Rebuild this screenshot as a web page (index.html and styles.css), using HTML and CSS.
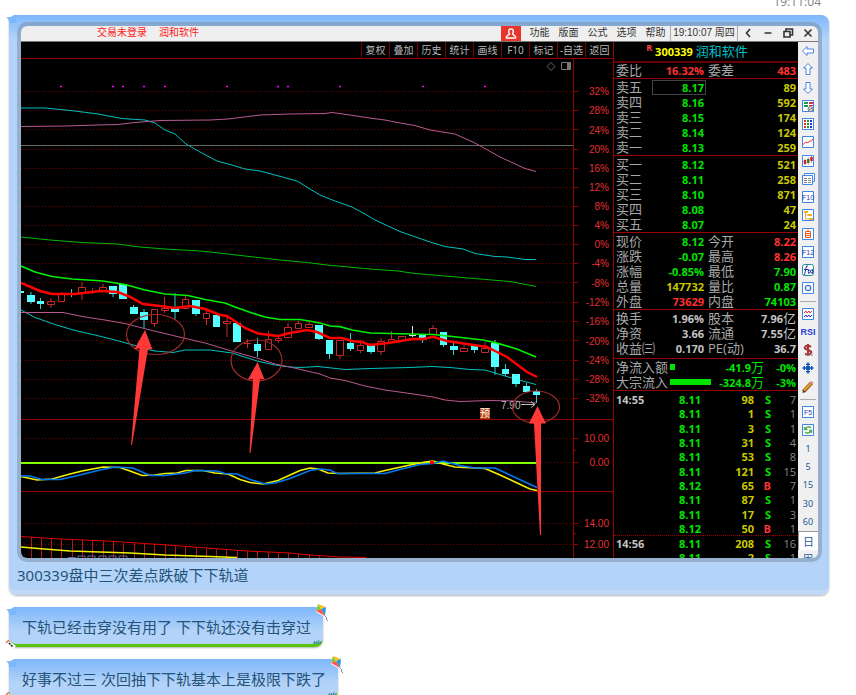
FILE: index.html
```html
<!DOCTYPE html>
<html lang="zh-CN">
<head>
	<meta charset="utf-8">
	<title>300339 润和软件</title>
	<link rel="stylesheet" href="styles.css">
</head>
<body>
<div class="chat">
	<div class="time">19:11:04</div>

	<div class="bubble big">
		<svg class="tail" viewBox="0 0 10 10"><path d="M0 2Q5 3 8 0H10V8H3Q3 4 0 2z" fill="#7db7fb"/></svg>
		<div class="frame">
			<div class="titlebar">
				<span class="login">交易未登录</span>
				<span class="login">润和软件</span>
				<button class="user" aria-label="用户"><svg viewBox="0 0 12 12"><path d="M6 1C3 1 3.500 4 4.500 6L1.500 8.500V10H10.500V8.500L7.500 6C8.500 4 9 1 6 1z" fill="none" stroke="#fff" stroke-width="1.500"/></svg></button>
				<button>功能</button><button>版面</button><button>公式</button><button>选项</button><button>帮助</button>
				<span class="clock">19:10:07 周四</span>
				<button class="win" aria-label="后退"><svg viewBox="0 0 12 12"><path d="M8 2L4.500 6L8 10"/></svg></button>
				<button class="win" aria-label="最小化"><svg viewBox="0 0 12 12"><path d="M2.500 6H9.500"/></svg></button>
				<button class="win" aria-label="还原"><svg viewBox="0 0 12 12"><path d="M4 4V2H10.500V8H8.500M2 4.500H8V10H2z"/></svg></button>
				<button class="win" aria-label="关闭"><svg viewBox="0 0 12 12"><path d="M2.500 2.500L9.500 9.500M9.500 2.500L2.500 9.500"/></svg></button>
			</div>

			<div class="work">
				<div class="left">
					<div class="tabs">
						<button>复权</button><button>叠加</button><button>历史</button><button>统计</button><button>画线</button><button>F10</button><button>标记</button><button>-自选</button><button>返回</button>
					</div>
					<svg class="chart" viewBox="21 59 592 499">
						<!-- grid -->
						<path class="dots" d="M21 91.5H571M21 110.5H571M21 129.500H571M21 149.500H571M21 168.500H571M21 187.500H571M21 206.500H571M21 225.500H571M21 244.500H571M21 263.500H571M21 282.500H571M21 302.500H571M21 321.500H571M21 340.500H571M21 360.500H571M21 379.500H571M21 398.500H571M21 438.500H571M539 462.500H571M21 523.500H571M21 544.500H571"/>
						<path class="rule" d="M573.500 59V558M21 419.500H613M21 491.500H613M574 91.500h4M574 110.500h4M574 129.500h4M574 149.500h4M574 168.500h4M574 187.500h4M574 206.500h4M574 225.500h4M574 244.500h4M574 263.500h4M574 282.500h4M574 302.500h4M574 321.500h4M574 340.500h4M574 360.500h4M574 379.500h4M574 398.500h4M574 438.500h4M574 450.500h2M574 462.500h4M574 523.500h4M574 533.500h2M574 544.500h4"/>
						<path d="M21 145.500H573" stroke="#666" />
						<path d="M551 62.500l4 4-4 4-4-4z" fill="none" stroke="#666"/>
						<path d="M561.500 62.500h9v7h-9z" fill="none" stroke="#777"/><path d="M567 63h3v6h-3z" fill="#777"/>
						<path d="M60 86.500h2M112 86.500h2M122 86.500h2M143 86.500h2M164 86.500h2M226 86.500h2M277 86.500h2M287 86.500h2M339 86.500h2M422 86.500h2M484 86.500h2" stroke="#f0f" stroke-width="1.500"/>
						<!-- axis -->
						<g class="axis">
							<text x="609" y="95">32%</text><text x="609" y="114">28%</text><text x="609" y="134">24%</text><text x="609" y="153">20%</text><text x="609" y="172">16%</text><text x="609" y="191">12%</text><text x="609" y="210">8%</text><text x="609" y="229">4%</text><text x="609" y="248">0%</text><text x="609" y="267">-4%</text><text x="609" y="287">-8%</text><text x="609" y="306">-12%</text><text x="609" y="325">-16%</text><text x="609" y="345">-20%</text><text x="609" y="364">-24%</text><text x="609" y="383">-28%</text><text x="609" y="402">-32%</text>
							<text x="609" y="442">10.00</text><text x="609" y="466">0.00</text><text x="609" y="527">14.00</text><text x="609" y="548">12.00</text>
						</g>
						<!-- outer tracks -->
						<polyline class="cyan" points="21,108 45,108 60,109.500 75,111 98,114 122,118.500 145,120 155,123 165,130 175,134 186,144 200,152 217,161 232,165 245,169 260,171 275,175 297,181 305,186 320,195 335,201 352,207 365,214 375,220 400,231.500 430,242 445,246.500 463,249 475,253.500 495,256.500 507,257 525,259.500 536,259.500"/>
						<polyline class="pink" points="21,126.500 66,126 97,125 118,124.500 135,122.500 160,120.500 210,120 228,119 260,115 290,114 325,113.500 332,112.500 350,115 373,118.500 385,120 400,123 415,125.500 430,130 455,134 475,143 500,157 525,168.500 536,171.500"/>
						<polyline class="thin" points="21,237 50,240 82,242.500 117,244 140,247 165,249 200,251 219,253 245,256 280,260 307,262.500 327,265 370,269 398,271 415,273.500 445,276 480,279 510,281.500 536,286.500"/>
						<polyline class="cyan" points="21,310 35,317.500 55,324.500 75,330.500 95,335 115,340 135,345.500 145,349 155,351 173,352.500 185,350 210,350 232,353 257,361 275,365 290,367 300,367.500 318,366.500 345,369.500 370,368.500 410,367.500 432,366.500 450,367.500 470,369.500 485,370 495,373 515,379 536,384.500"/>
						<polyline class="pink" points="21,312.500 63,312.500 85,317 105,320 125,323.500 150,330 175,336 205,343 235,352 260,359 275,364 290,367 320,374 330,378 345,380.500 365,386 385,390 410,393.500 433,397 445,400 460,401.500 490,400.500 515,401 536,403"/>
						<!-- candles: down, then up -->
						<path class="downwick" d="M31 292V304M40.500 298V309M71.500 289V297M68 293.500h7M113 286V297M133.500 305V314M144 309V328M175 293V319M196 300V316M257.500 338V357M319 325V340M329.500 340V359M350.500 333V351M371 345V354M422.500 334V343M443.500 332V347M453.500 343V355M474.500 346V353M495 340V375M505.500 364V376M516 374V387M526.500 383V392M536.500 389V403"/>
						<path class="down" d="M21 291h3v2h-3zM27 295h8v7h-8zM37 301h7v3h-7zM109 286h8v8h-8zM119 284h8v15h-8zM130 307h8v7h-8zM140 312h8v8h-8zM171 308h8v4h-8zM192 300h8v14h-8zM213 315h7v12h-7zM233 323h8v19h-8zM254 344h7v7h-7zM315 325h8v14h-8zM326 340h7v14h-7zM347 343h7v6h-7zM367 345h8v7h-8zM419 334h7v6h-7zM440 332h7v13h-7zM450 346h8v4h-8zM471 346h7v4h-7zM491 343h8v24h-8zM502 369h7v5h-7zM512 374h8v10h-8zM523 386h7v6h-7zM533 391h7v4h-7z"/>
						<path class="up" d="M47.500 301.500h7v3h-7zM51 298v3M51 305v3M58.500 294.500h6v7h-6zM62 292v2M78.500 287.500h7v5h-7zM82 282v5M82 293v7M92.500 288v6M99.500 287.500h7v3h-7zM103 284v3M151.500 309.500h6v14h-6zM154.500 324v3M161.500 308.500h7v2h-7zM164.500 297v11M164.500 311v2M182.500 299.500h6v9h-6zM185.500 296v3M203.500 313.500h6v5h-6zM206.500 311v2M206.500 319v6M223.500 321.500h7v2h-7zM227 317v4M227 324v13M244 343.500h7M247.500 339v9M265.500 339.500h6v10h-6zM268.500 331v8M275.500 338.500h6v2h-6zM278.500 335v3M278.500 341v2M284.500 327.500h7v10h-7zM288 323v4M295.500 323.500h6v5h-6zM298.500 321v2M305.500 324.500h7v3h-7zM309 320v4M336.500 340.500h7v15h-7zM340 356v3M357.500 345.500h6v5h-6zM360.500 340v5M360.500 351v2M377.500 341.500h7v10h-7zM381 338v3M381 352v3M388.500 339.500h6v3h-6zM391.500 331v8M398.500 336.500h7v4h-7zM429.500 328.500h7v6h-7zM433 325v3M460.500 348.500h7v3h-7zM464 344v4M481.500 348.500h7v4h-7zM485 342v6"/>
						<path d="M412.500 326v11M409 335.500h7" stroke="#ddd"/>
						<polyline class="lime" points="21,266 35,272 52,276.500 72,279 103,281 125,284.500 145,290 165,294 188,295.500 205,299.500 225,303 235,307 252,313 265,317 280,319.500 300,319.500 312,321.500 320,323 330,326 340,326.600 352,330 370,333 433,334.500 457,337 483,340 495,342.600 517,349 536,357"/>
						<polyline class="hot" points="21,283 40,291 52,294 75,294 100,291 118,292 130,297 143,304 160,306 175,308 190,306 205,309 220,315 227,316 245,328 258,333.500 278,336 290,333 307,330 317,332 330,338 342,338 352,341 362,342 370,345 388,343 413,339 423,339 433,336.700 447,341 487,347 497,352 507,357 527,372 537,377"/>
						<!-- oscillator -->
						<path d="M21 463H537" stroke="#7fff00" stroke-width="2"/>
						<polyline class="yellow" points="21,476.500 37,480 52,479 70,474 82,471 103,467 120,467.500 130,471 142,475.500 155,475 165,473.500 177,473 186,470.500 203,470.500 215,473 228,474 240,479.500 250,482.500 263,484 278,480.500 290,475 300,470.500 310,468 318,469 328,473 340,473.500 375,473 385,470.500 410,465 425,462 433,461 443,464 455,467 485,468.500 500,475 515,482 530,489 537,490.500"/>
						<polyline class="blue" points="21,476 30,476 42,479.500 60,479.500 80,475 100,470 115,467 133,468 150,475.500 165,475.500 185,473 195,470.500 217,471 225,473.500 237,474 250,479.500 265,484 275,483 290,478.500 310,470.500 320,469 330,470 337,473.500 385,473.500 400,469.500 420,464.500 433,463.500 443,461 460,465.500 475,468 495,468 537,487.500"/>
						<path d="M430 462.500h4" stroke="#f00" stroke-width="3"/>
						<!-- third panel -->
						<path d="M31.500 537V558M41.500 538V558M51.500 538V558M61.500 539V558M72.500 540V558M82.500 540V558M92.500 541V558M103.500 541V558M113.500 542V558M123.500 543V558M134.500 543V558M144.500 544V558M154.500 544V558M165.500 545V558M175.500 546V558M185.500 547V558M196.500 547V558M206.500 548V558M216.500 549V558M226.500 550V558M237.500 550V558M247.500 551V558M257.500 552V558M268.500 552V558M278.500 553V558M288.500 553V558M298.500 554V558M309.500 555V558M319.500 556V558M329.500 557V558" stroke="#b01818"/>
						<polyline points="21,536.500 60,539 107,541 160,544.500 200,547.500 247,551 290,553 310,555 340,557 366,557.500" fill="none" stroke="#d00"/>
						<polyline class="yellow" points="21,547 38,548.500 70,551 130,553 165,555 210,556.500 237,557.500"/>
						<path d="M68 557.500h8M78 558v-2h7v2M88 558v-2h7v2M99 558v-2h7v2M109 558v-2h7v2M119 558v-2h8v2" fill="none" stroke="#669"/>
						<!-- marks -->
						<path d="M480 408h10v11h-10z" fill="#b8440c"/><text x="480" y="417" class="mark">预</text>
						<text x="501" y="409" class="low">7.90</text>
						<path d="M521 404.500H535M531 401.500l4 3-4 3" fill="none" stroke="#bbb"/>
						<g fill="none" stroke="#a02c2c" stroke-width="1.200"><ellipse cx="155.500" cy="334.500" rx="29" ry="20"/><ellipse cx="256.500" cy="360.500" rx="25.500" ry="20.500"/><ellipse cx="536" cy="407" rx="23.500" ry="16"/></g>
						<path class="arrow" d="M145 330L152.500 349.500 148 349 132 445H131L139.500 348.500 134.500 349zM257.500 362L264.500 379.500 260 379 250.500 453H249.500L253 379 248 379.500zM537.500 406L546 423.500 541 423.500 541 535H540L534 423.500 529 423.500z"/>
					</svg>
				</div>

				<div class="quote">
					<h1><sup>R</sup> <b>300339</b> <span>润和软件</span></h1>
					<table class="ratio"><tr><th>委比</th><td class="r">16.32%</td><th>委差</th><td class="r">483</td></tr></table>
					<table class="book">
						<tr><th>卖五</th><td class="g sel">8.17</td><td class="y" colspan="2">89</td></tr>
						<tr><th>卖四</th><td class="g">8.16</td><td class="y" colspan="2">592</td></tr>
						<tr><th>卖三</th><td class="g">8.15</td><td class="y" colspan="2">174</td></tr>
						<tr><th>卖二</th><td class="g">8.14</td><td class="y" colspan="2">124</td></tr>
						<tr><th>卖一</th><td class="g">8.13</td><td class="y" colspan="2">259</td></tr>
					</table>
					<table class="book">
						<tr><th>买一</th><td class="g">8.12</td><td class="y" colspan="2">521</td></tr>
						<tr><th>买二</th><td class="g">8.11</td><td class="y" colspan="2">258</td></tr>
						<tr><th>买三</th><td class="g">8.10</td><td class="y" colspan="2">871</td></tr>
						<tr><th>买四</th><td class="g">8.08</td><td class="y" colspan="2">47</td></tr>
						<tr><th>买五</th><td class="g">8.07</td><td class="y" colspan="2">24</td></tr>
					</table>
					<table>
						<tr><th>现价</th><td class="g">8.12</td><th>今开</th><td class="r">8.22</td></tr>
						<tr><th>涨跌</th><td class="g">-0.07</td><th>最高</th><td class="r">8.26</td></tr>
						<tr><th>涨幅</th><td class="g">-0.85%</td><th>最低</th><td class="g">7.90</td></tr>
						<tr><th>总量</th><td class="y">147732</td><th>量比</th><td class="g">0.87</td></tr>
						<tr><th>外盘</th><td class="r">73629</td><th>内盘</th><td class="g">74103</td></tr>
					</table>
					<table class="stat">
						<tr><th>换手</th><td>1.96%</td><th>股本</th><td>7.96<i>亿</i></td></tr>
						<tr><th>净资</th><td>3.66</td><th>流通</th><td>7.55<i>亿</i></td></tr>
						<tr><th>收益㈢</th><td>0.170</td><th>PE(动)</th><td>36.7</td></tr>
					</table>
					<table class="flow">
						<tr><th>净流入额</th><td><span class="bar" style="width:5px"></span></td><td class="g">-41.9<i>万</i></td><td class="g">-0%</td></tr>
						<tr><th>大宗流入</th><td><span class="bar" style="width:41px"></span></td><td class="g">-324.8<i>万</i></td><td class="g">-3%</td></tr>
					</table>
					<table class="ticks">
						<tr><td>14:55</td><td class="g">8.11</td><td class="y">98</td><td class="g">S</td><td>7</td></tr>
						<tr><td></td><td class="g">8.11</td><td class="y">1</td><td class="g">S</td><td>1</td></tr>
						<tr><td></td><td class="g">8.11</td><td class="y">3</td><td class="g">S</td><td>1</td></tr>
						<tr><td></td><td class="g">8.11</td><td class="y">31</td><td class="g">S</td><td>4</td></tr>
						<tr><td></td><td class="g">8.11</td><td class="y">53</td><td class="g">S</td><td>8</td></tr>
						<tr><td></td><td class="g">8.11</td><td class="y">121</td><td class="g">S</td><td>15</td></tr>
						<tr><td></td><td class="g">8.12</td><td class="y">65</td><td class="r">B</td><td>7</td></tr>
						<tr><td></td><td class="g">8.11</td><td class="y">87</td><td class="g">S</td><td>1</td></tr>
						<tr><td></td><td class="g">8.11</td><td class="y">17</td><td class="g">S</td><td>3</td></tr>
						<tr><td></td><td class="g">8.12</td><td class="y">50</td><td class="r">B</td><td>1</td></tr>
						<tr class="minute"><td>14:56</td><td class="g">8.11</td><td class="y">208</td><td class="g">S</td><td>16</td></tr>
						<tr><td></td><td class="g">8.11</td><td class="y">2</td><td class="g">S</td><td>1</td></tr>
					</table>
				</div>

				<div class="tools">
					<button aria-label="左"><svg viewBox="0 0 14 14"><path class="ar" d="M1.500 7L6 2.500V5H12.500V9H6V11.500z"/></svg></button>
					<button aria-label="上"><svg viewBox="0 0 14 14"><path class="ar" d="M7 1.500L11.500 6H9V12.500H5V6H2.500z"/></svg></button>
					<button aria-label="下"><svg viewBox="0 0 14 14"><path class="ar" d="M7 12.500L2.500 8H5V1.500H9V8H11.500z"/></svg></button>
					<button aria-label="报价"><svg viewBox="0 0 14 14"><path class="bx" d="M1.500 1.500h11v11h-11z"/><path d="M3 3h4v2H3zM3 6h4v2H3z" fill="#1a9a4a"/><path d="M8 3h4v2H8zM8 6h4v1H8z" fill="#d33"/><circle cx="9.500" cy="10" r="2.500" fill="#ddd" stroke="#777"/><path d="M8 11l3-2" stroke="#777"/></svg></button>
					<button aria-label="列表"><svg viewBox="0 0 14 14"><path class="bx" d="M1.500 1.500h11v11h-11z"/><path d="M4 3v9" stroke="#d33" stroke-width="2" stroke-dasharray="2 1"/><path d="M7 3v9" stroke="#292" stroke-width="2" stroke-dasharray="2 1"/><path d="M10 3v9" stroke="#23d" stroke-width="2" stroke-dasharray="2 1"/></svg></button>
					<button aria-label="分时"><svg viewBox="0 0 14 14"><path class="bx" d="M1.500 1.500h11v11h-11z"/><path d="M2 9.500L5 7 7 8 9 5.500 10 6.500 12 4" fill="none" stroke="#e33"/></svg></button>
					<button aria-label="K线"><svg viewBox="0 0 14 14"><path class="bx" d="M1.500 1.500h11v11h-11z"/><path d="M4 6v4M10.500 3v4" stroke="#e11" stroke-width="2.500"/><path d="M7.300 5v4" stroke="#183" stroke-width="2.500"/><path d="M4 5v6M7.300 3v8M10.500 2v7" stroke="#a33" stroke-width=".5"/></svg></button>
					<button aria-label="窗口"><svg viewBox="0 0 14 14"><path class="bx" d="M3.500 1.500h10v8h-10z"/><path class="bx" d="M1.500 3.500h10v9h-10z"/><path d="M3 6.500h7M3 8.500h7M3 10.500h7" stroke="#888" stroke-dasharray="3 1"/></svg></button>
					<button aria-label="F10"><svg viewBox="0 0 14 14"><path class="bx" d="M1.500 1.500h11v11h-11z"/><text x="7" y="10">F10</text></svg></button>
					<button aria-label="树"><svg viewBox="0 0 14 14"><path class="bx" d="M1.500 1.500h11v11h-11z"/><path d="M3 3h4v2H3zM7 6h4v2H7zM8 10h4v2H8z" fill="#f0b020"/><path d="M4.500 5v6H8M4.500 7H7" fill="none" stroke="#da5"/></svg></button>
					<button aria-label="自选"><svg viewBox="0 0 14 14"><path class="bx" d="M1.500 1.500h11v11h-11z"/><path d="M4.500 4.500h5v6h-5zM4.500 6.500h5M4.500 8.500h5M7 2.500v2" fill="none" stroke="#e85a14"/></svg></button>
					<button aria-label="F12"><svg viewBox="0 0 14 14"><path class="bx" d="M1.500 1.500h11v11h-11z"/><text x="7" y="10">F12</text></svg></button>
					<button aria-label="公式"><svg viewBox="0 0 14 14"><rect x="1.500" y="1.500" width="11" height="11" rx="2" fill="#fff" stroke="#298a9a"/><path d="M7 3Q5 2 5 5L3.500 12M3 6.500H7M8 6Q6.500 8 8 11M11 6Q12.500 8 11 11M8.500 7l2 3M10.500 7l-2 3" fill="none" stroke="#23a"/></svg></button>
					<button aria-label="圈"><svg viewBox="0 0 14 14"><path class="bx" d="M1.500 1.500h11v11h-11z"/><circle cx="7" cy="7" r="2.700" fill="none" stroke="#37b" stroke-width="1.300"/></svg></button>
					<hr>
					<button aria-label="指标"><svg viewBox="0 0 14 14"><path class="bx" d="M1.500 1.500h11v11h-11z"/><path d="M3 6l2-2 1 2 2-2 1 2 2-2" fill="none" stroke="#e33"/><path d="M3 10l2-2 1 2 2-2 1 2 2-2" fill="none" stroke="#33c"/></svg></button>
					<button class="rsi">RSI</button>
					<button aria-label="资金"><svg viewBox="0 0 14 14"><path d="M10 4Q7 1.500 4.500 3.500T7 7T9.500 10.500T4 10.500M7 1v12" fill="none" stroke="#a33" stroke-width="2"/><path d="M4 12h8" stroke="#888"/></svg></button>
					<button aria-label="移动"><svg viewBox="0 0 14 14"><path d="M7 1L9.500 4h-5zM7 13L4.500 10h5zM1 7L4 4.500v5zM13 7L10 9.500v-5zM5 5h4v4H5z" fill="#1558b8"/><path d="M7 3v8M3 7h8" stroke="#1558b8" stroke-width="1.500"/></svg></button>
					<button aria-label="画笔"><svg viewBox="0 0 14 14"><path d="M2.500 11.500L10.500 3" stroke="#8a5a1a" stroke-width="4"/><path d="M3 10.500L10 3.500" stroke="#f0a030" stroke-width="2"/><path d="M10 3.500l1.500-1.500" stroke="#d88" stroke-width="3"/><path d="M1.500 13l.5-3 2 2z" fill="#333"/></svg></button>
					<hr>
					<button aria-label="F5"><svg viewBox="0 0 14 14"><path class="bx" d="M1.500 1.500h11v11h-11z"/><text x="7" y="10">F5</text></svg></button>
					<button aria-label="刷新"><svg viewBox="0 0 14 14"><path class="bx" d="M1.500 1.500h11v11h-11z"/><path d="M10 5Q7 2.500 4.500 5.500M3.500 4v2.500h3M4 9Q7 11.500 9.500 8.500M10.500 10V7.500H8" fill="none" stroke="#4cae4c" stroke-width="1.500"/></svg></button>
					<button>1</button><button>5</button><button>15</button><button>30</button><button>60</button>
					<button class="day">日</button><button class="week">周</button>
				</div>
			</div>
		</div>
		<p>300339盘中三次差点跌破下下轨道</p>
	</div>

	<div class="bubble">
		<svg class="tail" viewBox="0 0 10 10"><path d="M0 2Q5 3 8 0H10V8H3Q3 4 0 2z" fill="#7db7fb"/></svg>
		<p>下轨已经击穿没有用了 下下轨还没有击穿过</p>
		<svg class="kite" viewBox="0 0 14 18"><path d="M3 0L11 3 10 13 1 8z" fill="#fff"/><path d="M3 0L6 5 1 7z" fill="#7c3"/><path d="M3 0L11 3 6 5z" fill="#fb2"/><path d="M11 3L10 12 6 5z" fill="#29d"/><path d="M1 7L6 5 10 12z" fill="#f54"/><path d="M10 12l2 2-1 1 2 2" fill="none" stroke="#88b"/></svg>
		<svg class="grass" viewBox="0 0 9 4"><path d="M1 4L2 1M3 4L4 1M5 4L6 0M7 4L8 1M0 3h8" stroke="#398a8a" fill="none"/></svg>
		<svg class="line" viewBox="0 0 12 8"><path d="M1 3l3-3" stroke="#f65" stroke-width="1.500"/><path d="M4 3l6 4" stroke="#fff" stroke-width="3"/><path d="M4 3l4 4" stroke="#222" stroke-width="1.500" stroke-dasharray="2 1"/></svg>
	</div>

	<div class="bubble">
		<svg class="tail" viewBox="0 0 10 10"><path d="M0 2Q5 3 8 0H10V8H3Q3 4 0 2z" fill="#7db7fb"/></svg>
		<p>好事不过三 次回抽下下轨基本上是极限下跌了</p>
		<svg class="kite" viewBox="0 0 14 18"><path d="M3 0L11 3 10 13 1 8z" fill="#fff"/><path d="M3 0L6 5 1 7z" fill="#7c3"/><path d="M3 0L11 3 6 5z" fill="#fb2"/><path d="M11 3L10 12 6 5z" fill="#29d"/><path d="M1 7L6 5 10 12z" fill="#f54"/><path d="M10 12l2 2-1 1 2 2" fill="none" stroke="#88b"/></svg>
		<svg class="grass" viewBox="0 0 9 4"><path d="M1 4L2 1M3 4L4 1M5 4L6 0M7 4L8 1M0 3h8" stroke="#398a8a" fill="none"/></svg>
		<svg class="line" viewBox="0 0 12 8"><path d="M1 3l3-3" stroke="#f65" stroke-width="1.500"/><path d="M4 3l6 4" stroke="#fff" stroke-width="3"/><path d="M4 3l4 4" stroke="#222" stroke-width="1.500" stroke-dasharray="2 1"/></svg>
	</div>
</div>
</body>
</html>
```
FILE: styles.css
```css
*{margin: 0;padding: 0;box-sizing: border-box;}
body{background: #fff;overflow: hidden;font-family: "Noto Sans","Noto Sans CJK SC",sans-serif;}
button{border: 0;background: none;font: inherit;color: inherit;cursor: pointer;}
svg{display: block;}

.chat{height: 100vh;overflow: hidden;padding: 0 27px 0 9px;display: flex;flex-direction: column;align-items: flex-start;gap: 12px;}
.time{align-self: flex-end;margin: -6px 8px -3px 0;height: 12px;line-height: 16px;font-size: 12px;color: #888;}

/* bubbles */
.bubble{position: relative;flex: none;padding: 10px 12px 7px 13px;border-radius: 8px;background: linear-gradient(#7db7fb,#b3d3f8 24px);border-bottom: 3px solid #5bc50c;box-shadow: 0 1px 2px rgba(0,0,0,.3);}
.bubble p{font-size: 15px;line-height: 20px;color: #245378;white-space: nowrap;}
.bubble.big{align-self: stretch;padding: 7px 7px 2px 8px;border-bottom: 5px solid #c1d9f8;}
.bubble.big p{line-height: 26px;}
.tail{position: absolute;left: -3px;top: 0;width: 10px;height: 10px;}
.kite{position: absolute;right: -6px;top: -3px;width: 14px;height: 18px;}
.grass{position: absolute;right: 1px;bottom: 0;width: 9px;height: 4px;}
.line{position: absolute;left: -4px;bottom: -4px;width: 12px;height: 8px;}

/* trading window */
.frame{border: 4px solid rgba(120,140,165,.5);border-radius: 10px;background: #efefef;background-clip: padding-box;overflow: hidden;}
.titlebar{display: flex;align-items: stretch;height: 16px;border-bottom: 1px solid #777;font-size: 10px;line-height: 12px;color: #333;}
.titlebar button{width: 29px;padding-bottom: 3px;}
.titlebar .login{color: #f22;margin-right: 12px;}
.titlebar .login:first-child{margin-left: 76px;}
.titlebar .user{width: 20px;margin: 0 4px 0 auto;padding: 0 4px;background: #e8342a;}
.titlebar .clock{width: 68px;text-align: center;line-height: 14px;border: 1px solid #aaa;border-width: 0 1px;font-family: "Liberation Sans","Noto Sans CJK SC",sans-serif;}
.titlebar .win{width: 20px;padding: 0 4px 2px;}
.win svg{fill: none;stroke: #333;stroke-width: 1.6;width: 12px;height: 12px;}
.user svg{width: 12px;height: 12px;}
.work{display: grid;grid-template-columns: 1fr 185px 20px;max-height: 516px;overflow: hidden;}
.left{background: #000;min-width: 0;}
.tabs{display: flex;justify-content: flex-end;height: 17px;border-bottom: 1px solid #900;font-size: 10px;line-height: 14px;color: #b8b8b8;}
.tabs button{width: 28px;border-left: 1px solid #700;white-space: nowrap;}

/* chart */
.chart{width: 100%;height: 499px;}
.dots{stroke: #700;stroke-dasharray: 1 2;shape-rendering: crispEdges;}
.rule{stroke: #900;shape-rendering: crispEdges;}
.axis text{font: 10px "Liberation Sans",sans-serif;fill: #e03030;text-anchor: end;}
.chart polyline{fill: none;}
.cyan{stroke: #00c0c0;}
.pink{stroke: #b85a90;}
.thin{stroke: #00b800;}
.lime{stroke: #0e0;stroke-width: 1.7;}
.hot{stroke: #f00;stroke-width: 2.5;}
.yellow{stroke: #f0f000;stroke-width: 1.6;}
.blue{stroke: #0078f0;stroke-width: 1.6;}
.down{fill: #54ffff;}
.downwick{stroke: #3cc;}
.up{fill: none;stroke: #c82828;}
.arrow{fill: #ff3838;}
.mark{font: 10px "Noto Sans CJK SC",sans-serif;fill: #fff;}
.low{font: 10px "Liberation Sans",sans-serif;fill: #bbb;}

/* quote panel */
.quote{background: #000;border-left: 1px solid #900;color: #c4c4c4;font-family: "Open Sans","Noto Sans CJK SC",sans-serif;}
.quote h1{height: 21px;padding-right: 18px;border-bottom: 2px solid #600;line-height: 19px;text-align: center;font-size: 11px;font-weight: normal;white-space: nowrap;}
.quote h1 sup{font-size: 9px;font-weight: bold;line-height: 9px;color: #f44;}
.quote h1 b{color: #ff0;}
.quote h1 span{font-size: 13px;color: #00c0c8;}
.quote table{width: 100%;table-layout: fixed;border-collapse: collapse;border-bottom: 1px solid #900;}
.quote table:not(.ratio):not(.ticks){border-collapse: separate;border-spacing: 0;padding-top: 1px;}
.quote tr{height: 15px;}
.quote th{width: 38px;padding-left: 2px;font-size: 13px;line-height: 14px;font-weight: normal;text-align: left;color: #a8a8a8;white-space: nowrap;}
.quote td{padding-right: 2px;font-size: 11px;line-height: 13px;font-weight: bold;text-align: right;white-space: nowrap;}
.quote th + td{width: 54px;}
.quote i{font-style: normal;font-weight: normal;font-size: 13px;line-height: 13px;}
.quote .g{color: #00e400;}
.quote .r{color: #ff3232;}
.quote .y{color: #c8c800;}
.quote .sel{outline: 1px solid #444;outline-offset: -1px;}
.quote .stat{padding-bottom: 2px;}
.quote .flow th{width: 56px;}
.quote .flow th + td{width: 42px;}
.flow td:last-child{width: 32px;}
.bar{display: block;height: 6px;background: #00e400;}
.quote .ticks{height: 172px;margin-top: 2px;border: 0;}
.quote .ticks tr{height: 14px;}
.ticks td:first-child{width: 40px;text-align: left;padding-left: 2px;}
.ticks td:nth-child(2){width: 49px;}
.ticks td:nth-child(3){width: 53px;}
.ticks td:nth-child(4){width: 17px;}
.ticks td:last-child{color: #888;font-weight: normal;}
.ticks .minute td{border-top: 1px dotted #900;}

/* tool strip */
.tools{display: flex;flex-direction: column;height: 526px;background: #f0f0f0;font-size: 9px;color: #235a9a;}
.tools button{flex: 1 1 0;min-height: 0;display: flex;align-items: center;justify-content: center;}
.tools hr{flex: none;height: 1px;margin: 3px 2px;border: 0;background: #aaa;}
.tools svg{width: 14px;height: 14px;}
.tools text{font: 7px "Liberation Sans",sans-serif;fill: #2840b0;text-anchor: middle;}
.tools .rsi{font: bold 9px "Liberation Sans",sans-serif;color: #2a3fd0;}
.tools .day{background: #fff;border: 1px solid #999;border-width: 1px 0 0 1px;font-size: 11px;}
.tools .week{font-size: 11px;}
.ar{fill: #fff;stroke: #4a86e0;}
.bx{fill: #fff;stroke: #3f86e8;}
```
